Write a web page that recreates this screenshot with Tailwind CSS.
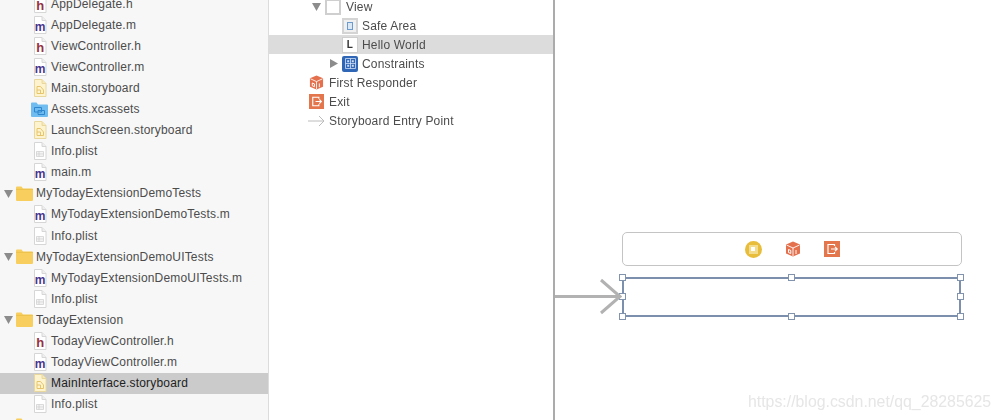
<!DOCTYPE html>
<html lang="en">
<head>
    <meta charset="UTF-8">
    <title>Today Extension Storyboard</title>
    <script src="https://cdn.jsdelivr.net/npm/@tailwindcss/browser@4"></script>
</head>
<body class="bg-white overflow-hidden">

<!-- icon symbols -->
<svg width="0" height="0" class="absolute">
    <symbol id="page" viewBox="0 0 14 18">
        <path d="M1.5 .5H9L13 4.5V17.5H1.5Z" fill="#fff" stroke="#d6d6d6"/>
        <path d="M9 .5V4.5H13" fill="#eee" stroke="#d6d6d6"/>
    </symbol>
    <symbol id="file-h" viewBox="0 0 14 18">
        <use href="#page"/>
        <text x="7.2" y="15" text-anchor="middle" font-family="Liberation Sans" font-weight="700" font-size="13" fill="#96303f">h</text>
    </symbol>
    <symbol id="file-m" viewBox="0 0 14 18">
        <use href="#page"/>
        <text x="7.2" y="15" text-anchor="middle" font-family="Liberation Sans" font-weight="700" font-size="12" fill="#47358c">m</text>
    </symbol>
    <symbol id="file-plist" viewBox="0 0 14 18">
        <use href="#page"/>
        <path d="M3.5 9.5H10.5V14.5H3.5ZM3.5 11.2H10.5M3.5 12.9H10.5M6 9.5V14.5" fill="none" stroke="#cccccc" stroke-width=".7"/>
    </symbol>
    <symbol id="file-story" viewBox="0 0 14 18">
        <path d="M1.5 .5H9L13 4.5V17.5H1.5Z" fill="#fdf3cf" stroke="#e8d89e"/>
        <path d="M9 .5V4.5H13" fill="#f7e9b8" stroke="#e8d89e"/>
        <path d="M4 7.5H7.5L10.5 11V14.5H4ZM4 11H7.5V14.5" fill="none" stroke="#e6c46c" stroke-width="1"/>
    </symbol>
    <symbol id="folder" viewBox="0 0 17 15">
        <path d="M0 14V1.5Q0 .5 1 .5H5.5L7 2.5H16Q17 2.5 17 3.5V14Q17 15 16 15H1Q0 15 0 14Z" fill="#f8cf5e"/>
        <path d="M0 3.4H17" stroke="#e8bb45" stroke-width=".7"/>
    </symbol>
    <symbol id="assets" viewBox="0 0 17 15">
        <path d="M0 14V1.5Q0 .5 1 .5H5.5L7 2.5H16Q17 2.5 17 3.5V14Q17 15 16 15H1Q0 15 0 14Z" fill="#6fbdf0"/>
        <path d="M3.5 5.5H10.5V10H3.5ZM7 8.5H13.5V12.5H7Z" fill="none" stroke="#2f86cc" stroke-width="1"/>
    </symbol>
    <symbol id="cube" viewBox="0 0 16 16">
        <path d="M8 .5L15 3.5V12.5L8 15.5L1 12.5V3.5Z" fill="#e4704d"/>
        <path d="M1.5 4L8 7L14.5 4M8 7V15" fill="none" stroke="#fff" stroke-width=".9"/>
        <path d="M3.5 8.5V11.5L5.8 12.5V9.5ZM11 9V13" fill="none" stroke="#fff" stroke-width="1"/>
    </symbol>
    <symbol id="exit" viewBox="0 0 16 16">
        <rect width="16" height="16" fill="#e3764c"/>
        <path d="M10.5 5V3.5H4V12.5H10.5V11" fill="none" stroke="#fff" stroke-width="1.2"/>
        <path d="M7 8H13M11 5.8L13.2 8L11 10.2" fill="none" stroke="#fff" stroke-width="1.2"/>
    </symbol>
    <symbol id="open" viewBox="0 0 9 9"><path d="M0 1H9L4.5 9Z" fill="#8c8c8c"/></symbol>
    <symbol id="closed" viewBox="0 0 9 9"><path d="M1 0L9 4.5L1 9Z" fill="#8c8c8c"/></symbol>
</svg>

<div class="relative flex h-[420px] w-[1000px] overflow-hidden text-[12px] tracking-[0.18px] text-[#4c4c4c] font-['Liberation_Sans',sans-serif] blur-[0.5px]">

    <!-- Project navigator -->
    <aside class="w-[269px] h-full shrink-0 overflow-hidden bg-[#f7f7f7] border-r border-[#dcdcdc]">
        <ul class="mt-[-7px]">
            <li class="flex items-center h-[21.1px] pl-[33px] gap-[4px]"><svg class="w-[14px] h-[18px]"><use href="#file-h"/></svg>AppDelegate.h</li>
            <li class="flex items-center h-[21.1px] pl-[33px] gap-[4px]"><svg class="w-[14px] h-[18px]"><use href="#file-m"/></svg>AppDelegate.m</li>
            <li class="flex items-center h-[21.1px] pl-[33px] gap-[4px]"><svg class="w-[14px] h-[18px]"><use href="#file-h"/></svg>ViewController.h</li>
            <li class="flex items-center h-[21.1px] pl-[33px] gap-[4px]"><svg class="w-[14px] h-[18px]"><use href="#file-m"/></svg>ViewController.m</li>
            <li class="flex items-center h-[21.1px] pl-[33px] gap-[4px]"><svg class="w-[14px] h-[18px]"><use href="#file-story"/></svg>Main.storyboard</li>
            <li class="flex items-center h-[21.1px] pl-[31px] gap-[3px]"><svg class="w-[17px] h-[15px]"><use href="#assets"/></svg>Assets.xcassets</li>
            <li class="flex items-center h-[21.1px] pl-[33px] gap-[4px]"><svg class="w-[14px] h-[18px]"><use href="#file-story"/></svg>LaunchScreen.storyboard</li>
            <li class="flex items-center h-[21.1px] pl-[33px] gap-[4px]"><svg class="w-[14px] h-[18px]"><use href="#file-plist"/></svg>Info.plist</li>
            <li class="flex items-center h-[21.1px] pl-[33px] gap-[4px]"><svg class="w-[14px] h-[18px]"><use href="#file-m"/></svg>main.m</li>
            <li class="flex items-center h-[21.1px] pl-[4px] gap-[3px]"><svg class="w-[9px] h-[9px]"><use href="#open"/></svg><svg class="w-[17px] h-[15px]"><use href="#folder"/></svg>MyTodayExtensionDemoTests</li>
            <li class="flex items-center h-[21.1px] pl-[33px] gap-[4px]"><svg class="w-[14px] h-[18px]"><use href="#file-m"/></svg>MyTodayExtensionDemoTests.m</li>
            <li class="flex items-center h-[21.1px] pl-[33px] gap-[4px]"><svg class="w-[14px] h-[18px]"><use href="#file-plist"/></svg>Info.plist</li>
            <li class="flex items-center h-[21.1px] pl-[4px] gap-[3px]"><svg class="w-[9px] h-[9px]"><use href="#open"/></svg><svg class="w-[17px] h-[15px]"><use href="#folder"/></svg>MyTodayExtensionDemoUITests</li>
            <li class="flex items-center h-[21.1px] pl-[33px] gap-[4px]"><svg class="w-[14px] h-[18px]"><use href="#file-m"/></svg>MyTodayExtensionDemoUITests.m</li>
            <li class="flex items-center h-[21.1px] pl-[33px] gap-[4px]"><svg class="w-[14px] h-[18px]"><use href="#file-plist"/></svg>Info.plist</li>
            <li class="flex items-center h-[21.1px] pl-[4px] gap-[3px]"><svg class="w-[9px] h-[9px]"><use href="#open"/></svg><svg class="w-[17px] h-[15px]"><use href="#folder"/></svg>TodayExtension</li>
            <li class="flex items-center h-[21.1px] pl-[33px] gap-[4px]"><svg class="w-[14px] h-[18px]"><use href="#file-h"/></svg>TodayViewController.h</li>
            <li class="flex items-center h-[21.1px] pl-[33px] gap-[4px]"><svg class="w-[14px] h-[18px]"><use href="#file-m"/></svg>TodayViewController.m</li>
            <li class="flex items-center h-[21.1px] pl-[33px] gap-[4px] bg-[#cbcbcb] text-[#222]"><svg class="w-[14px] h-[18px]"><use href="#file-story"/></svg>MainInterface.storyboard</li>
            <li class="flex items-center h-[21.1px] pl-[33px] gap-[4px]"><svg class="w-[14px] h-[18px]"><use href="#file-plist"/></svg>Info.plist</li>
            <li class="flex items-center h-[21.1px] pl-[16px]"><svg class="w-[17px] h-[15px]"><use href="#folder"/></svg></li>
        </ul>
    </aside>

    <!-- Document outline -->
    <section class="w-[286px] h-full shrink-0 border-r-2 border-[#ababab]">
        <ul class="mt-[-3px]">
            <li class="flex items-center h-[19px] pl-[43px] gap-[4px]">
                <svg class="w-[9px] h-[9px]"><use href="#open"/></svg>
                <span class="w-[16px] h-[16px] bg-white border-2 border-[#cfcfcf]"></span>
                <span class="ml-[1px]">View</span>
            </li>
            <li class="flex items-center h-[19px] pl-[73px] gap-[4px]">
                <span class="flex items-center justify-center w-[16px] h-[16px] bg-[#f0f0f0] border-2 border-[#d4d4d4]"><span class="w-[6px] h-[8px] border border-[#6c9bd0] bg-[#dbe8f6]"></span></span>
                Safe Area
            </li>
            <li class="flex items-center h-[19px] pl-[73px] gap-[4px] bg-[#dcdcdc]">
                <span class="flex items-center justify-center w-[16px] h-[16px] bg-white border border-[#cfcfcf] text-[10px] font-bold text-[#333]">L</span>
                Hello World
            </li>
            <li class="flex items-center h-[19px] pl-[60px] gap-[4px]">
                <svg class="w-[9px] h-[9px]"><use href="#closed"/></svg>
                <span class="flex items-center justify-center w-[16px] h-[16px] rounded-[2px] bg-[#2f66b5]">
                    <svg class="w-[11px] h-[11px]" viewBox="0 0 11 11"><path d="M.5 .5H10.5V10.5H.5ZM5.5 .5V10.5M.5 5.5H10.5" fill="none" stroke="#cfe0f6" stroke-width=".8"/><path d="M2.2 2.2H4.2V4.2H2.2ZM6.8 2.2H8.8V4.2H6.8ZM2.2 6.8H4.2V8.8H2.2ZM6.8 6.8H8.8V8.8H6.8Z" fill="#cfe0f6"/></svg>
                </span>
                Constraints
            </li>
            <li class="flex items-center h-[19px] pl-[40px] gap-[5px]"><svg class="w-[15px] h-[15px]"><use href="#cube"/></svg>First Responder</li>
            <li class="flex items-center h-[19px] pl-[40px] gap-[5px]"><svg class="w-[15px] h-[15px]"><use href="#exit"/></svg>Exit</li>
            <li class="flex items-center h-[19px] pl-[39px] gap-[4px]">
                <svg class="w-[17px] h-[12px]" viewBox="0 0 17 12"><path d="M0 6H16M11 1L16 6L11 11" fill="none" stroke="#bcbcbc"/></svg>
                Storyboard Entry Point
            </li>
        </ul>
    </section>

    <!-- Canvas -->
    <main class="relative flex-1 pt-[232px] pl-[67px]">
        <div class="flex items-center justify-center gap-[23px] w-[340px] h-[34px] bg-white rounded-[5px] border border-[#c4c4c4]">
            <span class="flex items-center justify-center w-[17px] h-[17px] rounded-full bg-[#e8bd3c]"><span class="flex items-center justify-center w-[9px] h-[9px] bg-[#f3dc8c]"><span class="w-[4px] h-[4px] bg-white"></span></span></span>
            <svg class="w-[16px] h-[16px]"><use href="#cube"/></svg>
            <svg class="w-[16px] h-[16px]"><use href="#exit"/></svg>
        </div>

        <!-- selected view with resize handles -->
        <div class="relative mt-[11px] w-[339px] h-[40px] border-2 border-[#7c90ad]">
            <span class="absolute -left-[5px] -top-[5px] w-[7px] h-[7px] bg-white border border-[#8294ad]"></span>
            <span class="absolute left-[164px] -top-[5px] w-[7px] h-[7px] bg-white border border-[#8294ad]"></span>
            <span class="absolute -right-[5px] -top-[5px] w-[7px] h-[7px] bg-white border border-[#8294ad]"></span>
            <span class="absolute -left-[5px] top-[14px] w-[7px] h-[7px] bg-white border border-[#8294ad]"></span>
            <span class="absolute -right-[5px] top-[14px] w-[7px] h-[7px] bg-white border border-[#8294ad]"></span>
            <span class="absolute -left-[5px] -bottom-[5px] w-[7px] h-[7px] bg-white border border-[#8294ad]"></span>
            <span class="absolute left-[164px] -bottom-[5px] w-[7px] h-[7px] bg-white border border-[#8294ad]"></span>
            <span class="absolute -right-[5px] -bottom-[5px] w-[7px] h-[7px] bg-white border border-[#8294ad]"></span>
        </div>

        <!-- initial view controller arrow -->
        <svg class="absolute left-0 top-[277px] w-[67px] h-[40px]" viewBox="0 0 67 40"><path d="M0 19.5H65M46 3L65 19.5L46 36" fill="none" stroke="#b2b2b2" stroke-width="3"/></svg>

        <span class="absolute left-[193px] top-[392px] text-[15.85px] leading-[19px] tracking-normal text-[#e6e6e6] whitespace-nowrap">https://blog.csdn.net/qq_28285625</span>
    </main>
</div>

</body>
</html>
